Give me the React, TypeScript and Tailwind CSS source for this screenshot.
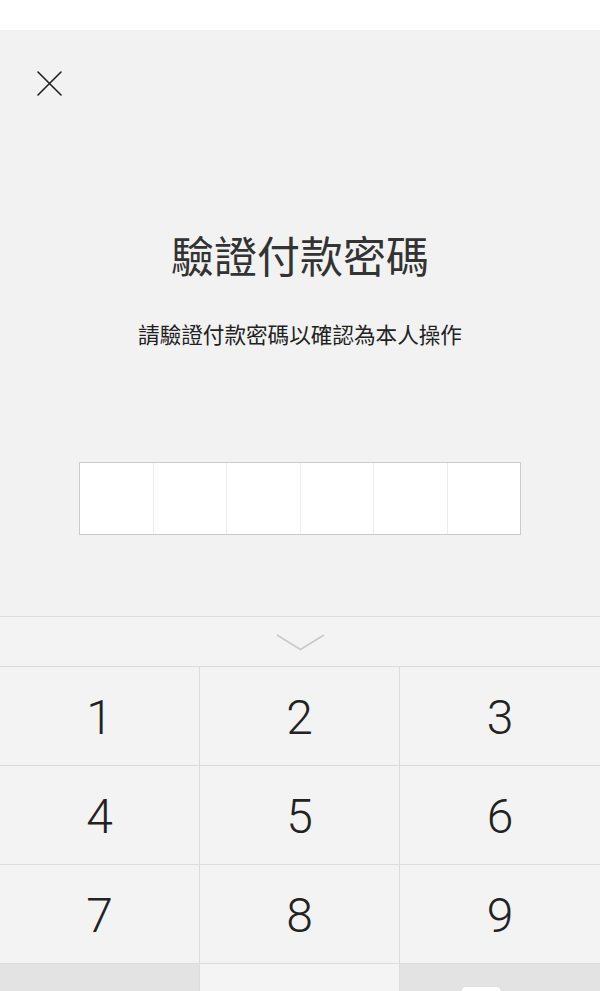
import React from "react";

const keys = ["1", "2", "3", "4", "5", "6", "7", "8", "9"];

export default function App() {
  return (
    <div
      className="w-[600px] h-[991px] overflow-hidden flex flex-col bg-[#f2f2f2]"
      style={{ fontFamily: '"Noto Sans CJK TC", "Noto Sans", sans-serif' }}
    >
      <div className="h-[30px] bg-white shrink-0" />
      <div className="h-[586px] shrink-0 flex flex-col">
        <div className="pl-[37px] pt-[41px]">
          <svg width="25" height="25" viewBox="0 0 25 25" fill="none">
            <path d="M1 1 L24 24 M24 1 L1 24" stroke="#1f1f1f" strokeWidth="1.6" strokeLinecap="round" />
          </svg>
        </div>
        <div className="mt-[128px] h-[60px] leading-[60px] text-center text-[43px] text-[#333333]">
          驗證付款密碼
        </div>
        <div className="mt-[35px] h-[30px] leading-[30px] text-center text-[21.6px] text-[#222222]">
          請驗證付款密碼以確認為本人操作
        </div>
        <div className="mt-[113px] ml-[79px] w-[442px] h-[73px] border border-[#cbcbcb] bg-white flex">
          {[0, 1, 2, 3, 4, 5].map((i) => (
            <div key={i} className={i < 5 ? "flex-1 border-r border-[#ececec]" : "flex-1"} />
          ))}
        </div>
      </div>
      <div className="flex-1 flex flex-col border-t border-[#dcdcdc] bg-[#f3f3f3]">
        <div className="h-[50px] shrink-0 flex items-center justify-center border-b border-[#dcdcdc]">
          <svg width="49" height="17" viewBox="0 0 49 17" fill="none" className="mt-[1px]">
            <path d="M1 1 L24.5 15.5 L48 1" stroke="#c9c9c9" strokeWidth="1.5" />
          </svg>
        </div>
        <div className="grid grid-cols-3 shrink-0" style={{ fontFamily: 'Roboto, "Liberation Sans", sans-serif' }}>
          {keys.map((k, i) => (
            <div
              key={k}
              className={
                (i % 3 < 2 ? "border-r " : "") +
                "h-[99px] border-b border-[#dcdcdc] flex items-center justify-center text-[48px] font-light text-[#222222] pt-[4px]"
              }
            >
              {k}
            </div>
          ))}
        </div>
        <div className="grid grid-cols-3 flex-1">
          <div className="bg-[#e3e3e3] border-r border-[#dcdcdc]" />
          <div className="bg-[#f4f4f4] border-r border-[#dcdcdc]" />
          <div className="bg-[#e3e3e3] relative">
            <svg width="50" height="40" viewBox="0 0 50 40" className="absolute left-[50px] top-[23px]">
              <path d="M14 0 H46 Q50 0 50 4 V36 Q50 40 46 40 H14 L0 20 Z" fill="#ffffff" />
            </svg>
          </div>
        </div>
      </div>
    </div>
  );
}
